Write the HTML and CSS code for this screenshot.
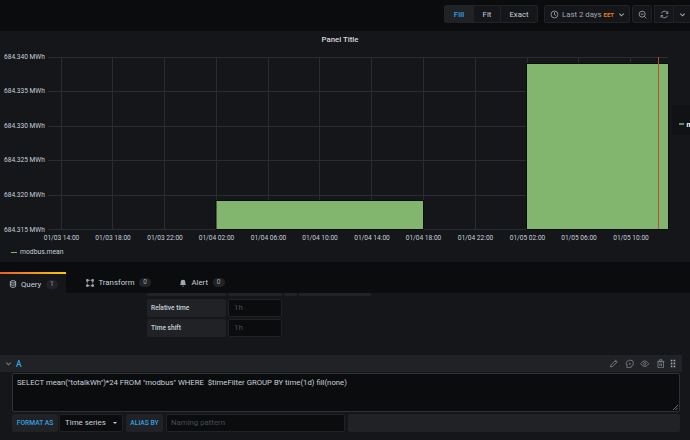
FILE: index.html
```html
<!DOCTYPE html>
<html lang="en">
<head>
    <meta charset="UTF-8">
    <title>Panel Title - Edit</title>
    <link rel="stylesheet" href="styles.css">
</head>
<body>

    <div class="topbar">
        <div class="btn-group">
            <span class="btn btn-fill">Fill</span>
            <span class="btn btn-fit">Fit</span>
            <span class="btn btn-exact">Exact</span>
        </div>
        <div class="btn time-picker">
            <svg class="icon" viewBox="0 0 12 12"><circle cx="6" cy="6" r="4.6"/><path d="M6 3v3.2l2 1.2"/></svg>
            <span class="time-text">Last 2 days</span>
            <span class="time-zone">EET</span>
            <svg class="chevron" viewBox="0 0 8 8"><path d="M1.5 3l2.5 2.5L6.500 3"/></svg>
        </div>
        <div class="btn zoom-out">
            <svg class="icon" viewBox="0 0 12 12"><circle cx="5.500" cy="5.500" r="4"/><path d="M3.700 5.500h3.600M8.500 8.500l2.500 2.500"/></svg>
        </div>
        <div class="refresh">
            <span class="refresh-icon">
                <svg class="icon" viewBox="0 0 12 12"><path d="M2 4.500A4.300 4.300 0 0 1 9.500 3.200L10.500 4.500M10.500 1.800v2.700H7.800M10 7.500A4.300 4.300 0 0 1 2.500 8.800L1.500 7.500M1.500 10.200V7.500h2.700"/></svg>
            </span>
            <span class="refresh-menu">
                <svg class="chevron" viewBox="0 0 8 8"><path d="M1.500 3l2.500 2.500L6.500 3"/></svg>
            </span>
        </div>
    </div>

    <div class="panel">
        <div class="panel-title">Panel Title</div>
        <svg class="chart" viewBox="0 47 690 195">
            <g class="grid">
                <path d="M48 57.500H668M48 91.500H668M48 126.500H668M48 160.500H668M48 195.500H668M48 229.500H668"/>
                <path d="M61.500 57V229M112.500 57V229M164.500 57V229M216.500 57V229M268.500 57V229M319.500 57V229M371.500 57V229M423.500 57V229M475.500 57V229M527.500 57V229M578.500 57V229M630.500 57V229"/>
            </g>
            <rect class="bar" x="216" y="200.500" width="207.500" height="29"/>
            <rect class="bar" x="526.500" y="63.500" width="142" height="166"/>
            <path class="now-line" d="M658.500 57V229"/>
            <g class="y-labels">
                <text x="4" y="59">684.340 MWh</text>
                <text x="4" y="93">684.335 MWh</text>
                <text x="4" y="128">684.330 MWh</text>
                <text x="4" y="162">684.325 MWh</text>
                <text x="4" y="197">684.320 MWh</text>
                <text x="4" y="231.500">684.315 MWh</text>
            </g>
            <g class="x-labels">
                <text x="61.500" y="239.500">01/03 14:00</text>
                <text x="113" y="239.500">01/03 18:00</text>
                <text x="165" y="239.500">01/03 22:00</text>
                <text x="216.500" y="239.500">01/04 02:00</text>
                <text x="268.500" y="239.500">01/04 06:00</text>
                <text x="320" y="239.500">01/04 10:00</text>
                <text x="372" y="239.500">01/04 14:00</text>
                <text x="423.500" y="239.500">01/04 18:00</text>
                <text x="475.500" y="239.500">01/04 22:00</text>
                <text x="527.500" y="239.500">01/05 02:00</text>
                <text x="579" y="239.500">01/05 06:00</text>
                <text x="631" y="239.500">01/05 10:00</text>
            </g>
            <rect class="side-legend" x="672" y="105" width="18" height="30"/>
            <path class="legend-dash" d="M679 124H684"/>
            <text class="side-legend-text" x="686.500" y="126.500">modbus.mean</text>
        </svg>
        <div class="legend">
            <span class="legend-line"></span>
            <span>modbus.mean</span>
        </div>
    </div>

    <div class="tabs">
        <div class="tab tab-active">
            <svg class="tab-icon" viewBox="0 0 12 12"><ellipse cx="6" cy="2.800" rx="4" ry="1.800"/><path d="M2 2.800v6.400c0 1 1.800 1.800 4 1.800s4-.8 4-1.800V2.800M2 6c0 1 1.800 1.800 4 1.800S10 7 10 6"/></svg>
            <span class="tab-text">Query</span>
            <span class="count">1</span>
        </div>
        <div class="tab tab-transform">
            <svg class="tab-icon" viewBox="0 0 12 12"><path d="M3.500 2h5M3.500 10h5M2 3.500v5M10 3.500v5" stroke-dasharray="2 1.500"/><rect x="1" y="1" width="2" height="2"/><rect x="9" y="1" width="2" height="2"/><rect x="1" y="9" width="2" height="2"/><rect x="9" y="9" width="2" height="2"/></svg>
            <span class="tab-text">Transform</span>
            <span class="count">0</span>
        </div>
        <div class="tab tab-alert">
            <svg class="tab-icon" viewBox="0 0 12 12"><path class="solid" d="M6 1a3.500 3.500 0 0 0-3.500 3.500V7L1.500 9h9l-1-2V4.500A3.500 3.500 0 0 0 6 1zM4.700 10a1.300 1.300 0 0 0 2.600 0z"/></svg>
            <span class="tab-text">Alert</span>
            <span class="count">0</span>
        </div>
    </div>

    <div class="editor">
        <div class="options">
            <div class="clipped-row">
                <span class="clip-a"></span>
                <span class="clip-b"></span>
                <span class="clip-c"></span>
                <span class="clip-d"></span>
            </div>
            <div class="option-row">
                <span class="option-label">Relative time</span>
                <span class="option-input">1h</span>
            </div>
            <div class="option-row">
                <span class="option-label">Time shift</span>
                <span class="option-input">1h</span>
            </div>
        </div>

        <div class="query-header">
            <svg class="query-chevron" viewBox="0 0 8 8"><path d="M1.500 3l2.500 2.500L6.500 3"/></svg>
            <span class="query-name">A</span>
            <div class="query-actions">
                <svg viewBox="0 0 12 12"><path d="M2 10l.5-2.500L8.500 1.500l2 2-6 6zM7.500 2.500l2 2"/></svg>
                <svg viewBox="0 0 12 12"><path d="M6 1.500h1a3.500 3.500 0 0 1 3.500 3.500v1a3.500 3.500 0 0 1-3 3.400V11H2.500V6.500H1.500A4.500 4.500 0 0 1 6 1.500z"/><path class="solid" d="M5.500 4.500l2 1.500-2 2z"/></svg>
                <svg viewBox="0 0 12 12"><path d="M1 6s2-3.500 5-3.500S11 6 11 6s-2 3.500-5 3.500S1 6 1 6z"/><circle cx="6" cy="6" r="1.500"/></svg>
                <svg viewBox="0 0 12 12"><path d="M2.500 3.500h7V11h-7zM1.500 3h9M4.500 2.500V1h3v1.500M5 5.500v3.500M7 5.500v3.500"/></svg>
                <svg class="drag" viewBox="0 0 8 12"><g class="dots"><rect x="1" y="1" width="2.200" height="2.200"/><rect x="4.800" y="1" width="2.200" height="2.200"/><rect x="1" y="4.900" width="2.200" height="2.200"/><rect x="4.800" y="4.900" width="2.200" height="2.200"/><rect x="1" y="8.800" width="2.200" height="2.200"/><rect x="4.800" y="8.800" width="2.200" height="2.200"/></g></svg>
            </div>
        </div>

        <div class="query-box">SELECT mean("totalkWh")*24 FROM "modbus" WHERE  $timeFilter GROUP BY time(1d) fill(none)<svg class="resize" viewBox="0 0 6 6"><path d="M0 6L6 0M3 6L6 3"/></svg></div>

        <div class="query-footer">
            <span class="field-label label-format">FORMAT AS</span>
            <span class="select-box">Time series<i class="caret"></i></span>
            <span class="field-label label-alias">ALIAS BY</span>
            <span class="alias-input">Naming pattern</span>
            <span class="filler"></span>
        </div>
    </div>

</body>
</html>
```

FILE: styles.css
```css
html, body {
    margin: 0;
    padding: 0;
}
body {
    width: 690px;
    height: 440px;
    overflow: hidden;
    background-color: #141619;
    color: #c7d0d9;
    font-family: Roboto, "Liberation Sans", sans-serif;
    font-size: 7.800px;
}
svg {
    display: block;
}

/* top bar */
.topbar {
    height: 31px;
    box-sizing: border-box;
    padding-top: 5px;
    background-color: #0b0c0e;
    display: flex;
    align-items: flex-start;
}
.btn-group {
    margin-left: 444px;
    display: flex;
    border: 1px solid #202226;
    border-radius: 2px;
    height: 18px;
    box-sizing: border-box;
}
.btn {
    display: flex;
    align-items: center;
    justify-content: center;
    box-sizing: border-box;
    height: 18px;
    background-color: #141619;
    white-space: nowrap;
}
.btn-group .btn {
    height: 16px;
}
.btn-fill {
    width: 28px;
    background-color: #202226;
    color: #33a2e5;
    font-weight: 500;
}
.btn-fit {
    width: 27px;
    border-left: 1px solid #202226;
}
.btn-exact {
    width: 37px;
    border-left: 1px solid #202226;
}
.time-picker {
    width: 86px;
    margin-left: 6px;
    border: 1px solid #202226;
    border-radius: 2px;
    justify-content: flex-start;
    padding-left: 5px;
}
.icon {
    width: 9px;
    height: 9px;
    fill: none;
    stroke: #9fa7b3;
    stroke-width: 1.100;
}
.chevron {
    width: 7px;
    height: 7px;
    fill: none;
    stroke: #9fa7b3;
    stroke-width: 1.200;
}
.time-text {
    margin-left: 3px;
    color: #9fa7b3;
}
.time-zone {
    margin-left: 2px;
    color: #eb7b18;
    font-size: 6px;
    font-weight: 700;
}
.time-picker .chevron {
    margin-left: 4px;
}
.zoom-out {
    width: 20px;
    margin-left: 2px;
    border: 1px solid #202226;
    border-radius: 2px;
}
.refresh {
    margin-left: 2px;
    flex: 1;
    height: 18px;
    box-sizing: border-box;
    display: flex;
    border: 1px solid #202226;
    border-right: none;
    background-color: #141619;
}
.refresh-icon {
    width: 18px;
    display: flex;
    align-items: center;
    justify-content: center;
    border-right: 1px solid #202226;
}
.refresh-menu {
    flex: 1;
    display: flex;
    align-items: center;
    justify-content: center;
}

/* graph panel */
.panel {
    height: 231px;
    background-color: #141619;
}
.panel-title {
    height: 16px;
    box-sizing: border-box;
    padding: 1px 10px 0 0;
    line-height: 15px;
    text-align: center;
    font-weight: 500;
    color: #d8d9da;
}
.chart {
    width: 690px;
    height: 195px;
}
.grid path {
    stroke: #2a2c30;
    stroke-width: 1;
    fill: none;
}
.bar {
    fill: #82b66f;
    stroke: #0b0c0e;
    stroke-width: 1;
}
.now-line {
    stroke: #b5512f;
    stroke-width: 1;
}
.y-labels text, .x-labels text {
    font-size: 6.600px;
    fill: #c7d0d9;
}
.x-labels text {
    text-anchor: middle;
}
.side-legend {
    fill: #111215;
}
.legend-dash {
    stroke: #82b66f;
    stroke-width: 1.500;
}
.side-legend-text {
    font-size: 7px;
    fill: #ffffff;
    font-weight: 700;
}
.legend {
    height: 20px;
    display: flex;
    align-items: center;
    padding-left: 11px;
    gap: 3px;
    font-size: 6.800px;
}
.legend-line {
    width: 6px;
    height: 1px;
    background-color: #82b66f;
}

/* tabs */
.tabs {
    height: 31px;
    box-sizing: border-box;
    padding-top: 10px;
    background-color: #0b0c0e;
    display: flex;
    font-size: 7.800px;
}
.tab {
    display: flex;
    align-items: center;
    height: 21px;
    gap: 4.500px;
}
.tab-icon {
    width: 8px;
    height: 8px;
    fill: none;
    stroke: #c7d0d9;
    stroke-width: 1.200;
}
.tab-icon .solid {
    fill: #9fa7b3;
    stroke: none;
}
.tab-active {
    width: 66px;
    box-sizing: border-box;
    padding-left: 8.500px;
    height: 22px;
    background-color: #141619;
    border-top: 2px solid #f05a28;
    border-image: linear-gradient(90deg, #f05a28, #fbca0a) 1;
}
.tab-transform {
    margin-left: 20px;
    width: 93px;
}
.count {
    width: 12px;
    height: 9px;
    line-height: 9px;
    border-radius: 5px;
    text-align: center;
    background-color: #202226;
    color: #9fa7b3;
    font-size: 6.500px;
}

/* query editor */
.editor {
    height: 147px;
    background-color: #141619;
}
.options {
    height: 62px;
    box-sizing: border-box;
    padding-left: 147px;
}
.clipped-row {
    height: 3px;
    display: flex;
    gap: 2px;
    margin-bottom: 3px;
}
.clipped-row span {
    background-color: #202226;
}
.clip-a { width: 79px; }
.clip-b { width: 54px; }
.clip-c { width: 13px; }
.clip-d { width: 72px; }
.option-row {
    display: flex;
    gap: 2px;
    height: 18px;
    margin-bottom: 2px;
}
.option-label {
    width: 79px;
    box-sizing: border-box;
    padding-left: 4px;
    line-height: 18px;
    background-color: #202226;
    border-radius: 2px;
    font-size: 6.600px;
    font-weight: 500;
}
.option-input {
    width: 54px;
    box-sizing: border-box;
    padding-left: 5px;
    line-height: 16px;
    background-color: #0b0c0e;
    border: 1px solid #202226;
    border-radius: 2px;
    color: #464c54;
}
.query-header {
    width: 682px;
    height: 17px;
    display: flex;
    align-items: center;
    box-sizing: border-box;
    padding-left: 5px;
    background-color: #202226;
}
.query-chevron {
    width: 7px;
    height: 7px;
    fill: none;
    stroke: #7b8087;
    stroke-width: 1.200;
}
.query-name {
    margin-left: 4px;
    color: #33a2e5;
    font-size: 8.500px;
    font-weight: 500;
}
.query-actions {
    margin-left: auto;
    margin-right: 6px;
    display: flex;
    align-items: center;
    gap: 6px;
}
.query-actions svg {
    width: 9.500px;
    height: 9.500px;
    fill: none;
    stroke: #7b8087;
    stroke-width: 1.100;
}
.query-actions .solid {
    fill: #7b8087;
    stroke: none;
}
.query-actions .drag {
    width: 6px;
    height: 9px;
    margin-left: -1px;
}
.query-actions .dots rect {
    fill: #9fa7b3;
    stroke: none;
}
.query-box {
    position: relative;
    margin: 1px 0 2px 12px;
    width: 668px;
    height: 39px;
    box-sizing: border-box;
    padding: 3px 4px;
    line-height: 11px;
    white-space: pre;
    background-color: #0b0c0e;
    border: 1px solid #2c3235;
    border-radius: 2px;
    font-size: 7.750px;
}
.resize {
    position: absolute;
    right: 1px;
    bottom: 1px;
    width: 5px;
    height: 5px;
    fill: none;
    stroke: #7b8087;
    stroke-width: 1;
}
.query-footer {
    margin-left: 12px;
    width: 668px;
    height: 18px;
    display: flex;
    gap: 1px;
}
.field-label {
    background-color: #202226;
    color: #33a2e5;
    line-height: 18px;
    text-align: center;
    font-size: 6.700px;
    font-weight: 500;
    border-radius: 2px;
}
.label-format {
    width: 46px;
}
.label-alias {
    width: 37px;
    margin-left: 2px;
}
.select-box {
    width: 64px;
    box-sizing: border-box;
    padding-left: 5px;
    background-color: #0b0c0e;
    border: 1px solid #202226;
    border-radius: 2px;
    line-height: 16px;
    font-size: 7.900px;
    position: relative;
}
.caret {
    position: absolute;
    right: 5px;
    top: 7px;
    border-left: 2.500px solid transparent;
    border-right: 2.500px solid transparent;
    border-top: 2.500px solid #c7d0d9;
}
.alias-input {
    width: 179px;
    margin-left: 2px;
    box-sizing: border-box;
    padding-left: 4px;
    background-color: #0b0c0e;
    border: 1px solid #202226;
    border-radius: 2px;
    line-height: 16px;
    color: #464c54;
}
.filler {
    flex: 1;
    margin-left: 2px;
    background-color: #202226;
    border-radius: 2px;
}
```
